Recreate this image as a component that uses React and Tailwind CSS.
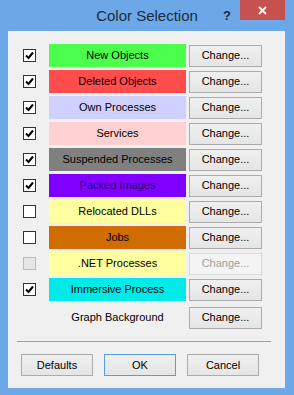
const rows = [
  { label: 'New Objects', color: 'bg-[#4CFF4C]', checked: true },
  { label: 'Deleted Objects', color: 'bg-[#FF4C4C]', checked: true },
  { label: 'Own Processes', color: 'bg-[#D0D0FF]', checked: true },
  { label: 'Services', color: 'bg-[#FFD0D0]', checked: true },
  { label: 'Suspended Processes', color: 'bg-[#808080]', checked: true },
  { label: 'Packed Images', color: 'bg-[#8000FF]', checked: true, text: 'text-[#2a0070]' },
  { label: 'Relocated DLLs', color: 'bg-[#FFFFA0]', checked: false },
  { label: 'Jobs', color: 'bg-[#D06C00]', checked: false },
  { label: '.NET Processes', color: 'bg-[#FFFFA0]', checked: false, disabled: true },
  { label: 'Immersive Process', color: 'bg-[#00EAEA]', checked: true },
];

const Check = ({ checked, disabled }) => (
  <div
    className={`w-[13px] h-[13px] border flex items-center justify-center ${
      disabled ? 'border-[#BCBCBC] bg-[#E6E6E6]' : 'border-[#333333] bg-white'
    }`}
  >
    {checked && (
      <svg width="9" height="9" viewBox="0 0 9 9">
        <path d="M1 4.5 L3.5 7 L8 1.5" fill="none" stroke="#000" strokeWidth="2" />
      </svg>
    )}
  </div>
);

const Button = ({ children, disabled, primary, className = '' }) => (
  <div
    className={`h-[22px] flex items-center justify-center border ${
      disabled
        ? 'border-[#D9D9D9] bg-[#F4F4F4] text-[#A0A0A0]'
        : primary
        ? 'border-[#569DE5] bg-gradient-to-b from-[#F0F0F0] to-[#E5E5E5] text-black'
        : 'border-[#ACACAC] bg-gradient-to-b from-[#F0F0F0] to-[#E5E5E5] text-black'
    } ${className}`}
  >
    {children}
  </div>
);

export default function App() {
  return (
    <div
      className="w-[294px] h-[395px] bg-[#6CA8E7] flex flex-col text-[11px] text-black"
      style={{ fontFamily: '"Liberation Sans", Arial, sans-serif' }}
    >
      {/* title bar */}
      <div className="relative h-[31px] flex items-center justify-center">
        <span className="text-[15px] text-[#1E2B3A] mt-[1px]">Color Selection</span>
        <span className="absolute left-[223px] top-[6px] text-[13px] font-bold text-[#1E2B3A]">?</span>
        <div className="absolute left-[240px] top-0 w-[45px] h-[20px] bg-[#C75050] flex items-center justify-center">
          <svg width="9" height="9" viewBox="0 0 9 9">
            <path d="M1 1 L8 8 M8 1 L1 8" stroke="#fff" strokeWidth="1.8" />
          </svg>
        </div>
      </div>

      {/* client area */}
      <div className="ml-[8px] w-[277px] h-[357px] bg-[#F0F0F0] flex flex-col pt-[13px]">
        <div className="flex flex-col gap-[3px]">
          {rows.map((r) => (
            <div key={r.label} className="flex items-center h-[23px]">
              <div className="w-[41px] pl-[15px]">
                <Check checked={r.checked} disabled={r.disabled} />
              </div>
              <div className={`w-[137px] h-[23px] flex items-center justify-center ${r.color} ${r.text || ''}`}>
                {r.label}
              </div>
              <Button disabled={r.disabled} className="ml-[3px] w-[73px]">
                Change...
              </Button>
            </div>
          ))}
          <div className="flex items-center h-[23px] mt-[2px]">
            <div className="w-[41px]" />
            <div className="w-[137px] h-[23px] flex items-center justify-center">Graph Background</div>
            <Button className="ml-[3px] w-[73px]">Change...</Button>
          </div>
        </div>

        <div className="mt-[12px] ml-[9px] w-[254px] h-[1px] bg-[#A0A0A0]" />

        <div className="mt-[12px] ml-[13px] flex gap-[11px]">
          <Button className="w-[72px]">Defaults</Button>
          <Button primary className="w-[72px]">OK</Button>
          <Button className="w-[72px]">Cancel</Button>
        </div>
      </div>
    </div>
  );
}
